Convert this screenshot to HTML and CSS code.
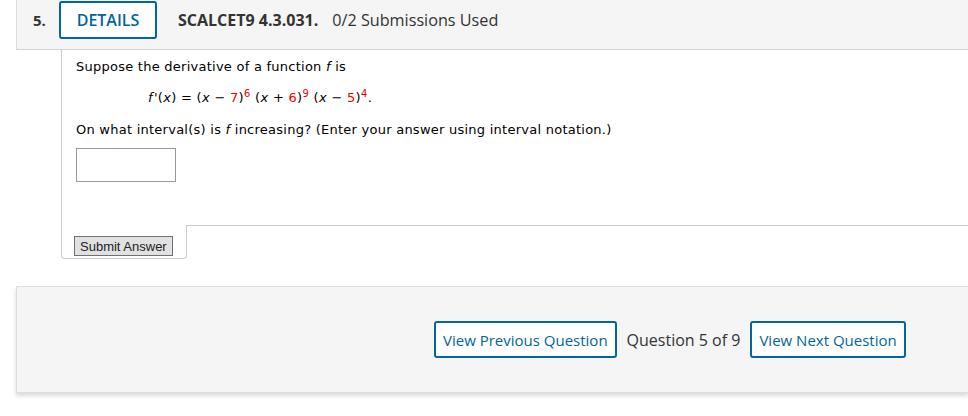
FILE: index.html
```html
<html>
	<head>
		<link rel="stylesheet" href="styles.css">
	</head>
	<body>
		<div class="page">
			<div class="question">
				<div class="q-head">
					<span class="q-num">5.</span>
					<button class="btn-details">DETAILS</button>
					<span class="q-code">SCALCET9 4.3.031.</span>
					<span class="q-subs">0/2 Submissions Used</span>
				</div>
				<div class="q-body">
					<p class="q-text">Suppose the derivative of a function <i>f</i> is</p>
					<p class="formula"><i class="fn">f</i>'(<i>x</i>) = (<i>x</i> &minus; <span class="red">7</span>)<sup class="red">6</sup> (<i>x</i> + <span class="red">6</span>)<sup class="red">9</sup> (<i>x</i> &minus; <span class="red">5</span>)<sup class="red">4</sup>.</p>
					<p class="q-text">On what interval(s) is <i>f</i> increasing? (Enter your answer using interval notation.)</p>
					<input class="answer" type="text">
				</div>
				<div class="q-foot">
					<div class="submit-tab"><button class="btn-submit">Submit Answer</button></div>
					<div class="foot-fill"></div>
				</div>
			</div>
			<div class="nav-panel">
				<button class="btn-nav">View Previous Question</button>
				<span class="nav-count">Question 5 of 9</span>
				<button class="btn-nav">View Next Question</button>
			</div>
		</div>
	</body>
</html>
```
FILE: styles.css
```css
body {
	margin: 0;
	background-color: #fff;
	font-family: "Open Sans", sans-serif;
	color: #333;
	overflow: hidden;
}

.page {
	padding-left: 16px;
}

.q-head {
	display: flex;
	align-items: center;
	height: 38px;
	padding: 1px 0 10px 16px;
	background-color: #f5f5f5;
	border-left: 1px solid #ddd;
	border-bottom: 1px solid #d3d3d3;
	font-size: 16px;
}

.q-num {
	font-weight: bold;
	font-size: 15px;
	width: 26px;
}

.btn-details {
	height: 38px;
	width: 98px;
	margin-right: 21px;
	background-color: #fff;
	border: 2px solid #00669b;
	border-radius: 3px;
	color: #00669b;
	font-family: "Open Sans", sans-serif;
	font-size: 16px;
	font-weight: 600;
}

.q-code {
	font-weight: bold;
	margin-right: 14px;
}

.q-subs {
	font-size: 16.2px;
}

.q-body {
	margin-left: 45px;
	padding: 9px 14px 43px;
	border-left: 1px solid #ccc;
	font-family: "DejaVu Sans", Verdana, sans-serif;
	font-size: 13px;
	letter-spacing: 0.25px;
	color: #000;
}

.q-text {
	margin: 0;
	line-height: 16px;
}

.formula {
	margin: 15px 0 16px 72px;
	line-height: 16px;
	letter-spacing: 0.3px;
}

.fn {
	margin-right: 1px;
}

.red {
	color: #e00;
}

sup {
	font-size: 10px;
	line-height: 0;
}

.answer {
	display: block;
	margin-top: 10px;
	width: 100px;
	height: 34px;
	border: 1px solid #999;
	border-radius: 0;
	padding: 0;
}

.q-foot {
	display: flex;
	margin-left: 45px;
}

.submit-tab {
	width: 112px;
	padding: 11px 0 2px 12px;
	border: 1px solid #ccc;
	border-top: none;
	border-radius: 0 0 4px 4px;
}

.foot-fill {
	flex: 1;
	border-top: 1px solid #ccc;
}

.btn-submit {
	display: block;
	height: 20px;
	padding: 0 5px;
	background-color: #e1e1e1;
	border: 1px solid #707070;
	border-radius: 0;
	font-family: "Liberation Sans", Arial, sans-serif;
	font-size: 13px;
	color: #222;
}

.nav-panel {
	display: flex;
	align-items: center;
	margin-top: 27px;
	height: 105px;
	padding-left: 417px;
	background-color: #f5f5f5;
	border: 1px solid #ddd;
	border-right: none;
	box-shadow: 0 3px 4px rgba(0, 0, 0, 0.15);
}

.btn-nav {
	height: 37px;
	padding: 0 7px;
	background-color: #fff;
	border: 2px solid #00669b;
	border-radius: 3px;
	color: #00669b;
	font-family: "Open Sans", sans-serif;
	font-size: 15px;
}

.nav-count {
	margin: 0 10px;
	font-size: 16px;
}
```
